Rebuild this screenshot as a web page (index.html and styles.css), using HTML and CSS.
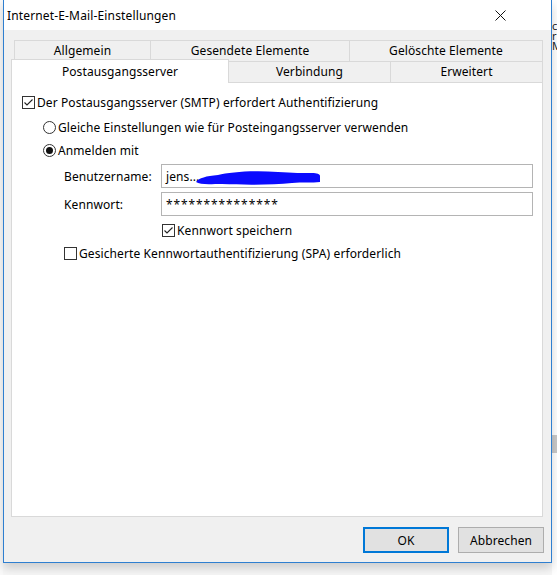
FILE: index.html
```html
<!DOCTYPE html>
<html lang="de">
<head>
<meta charset="utf-8">
<title>Internet-E-Mail-Einstellungen</title>
<link rel="stylesheet" href="styles.css">
</head>
<body>
<div class="screen">
  <div class="bg-left"></div>
  <div class="dialog">
    <div class="titlebar">
      <span class="title">Internet-E-Mail-Einstellungen</span>
      <svg class="close" width="11" height="11" viewBox="0 0 11 11"><path d="M0.5 0.5 L10.5 10.5 M10.5 0.5 L0.5 10.5" stroke="#111" stroke-width="1" fill="none"/></svg>
    </div>
    <div class="client">
      <div class="tabs">
        <div class="tab-row back">
          <div class="tab w-allg">Allgemein</div>
          <div class="tab w-ges">Gesendete Elemente</div>
          <div class="tab w-gel">Gelöschte Elemente</div>
        </div>
        <div class="tab-row front">
          <div class="tab selected w-post">Postausgangsserver</div>
          <div class="tab w-verb">Verbindung</div>
          <div class="tab w-erw">Erweitert</div>
        </div>
      </div>
      <div class="panel">
        <div class="row row-a">
          <svg class="box" width="13" height="13" viewBox="0 0 13 13"><rect x="0.5" y="0.5" width="12" height="12" fill="#fff" stroke="#333"/><path d="M2.5 6.5 L5 9 L10.5 3.5" stroke="#222" stroke-width="1.1" fill="none"/></svg>
          <span>Der Postausgangsserver (SMTP) erfordert Authentifizierung</span>
        </div>
        <div class="row row-b">
          <svg class="box" width="13" height="13" viewBox="0 0 13 13"><circle cx="6.5" cy="6.5" r="6" fill="#fff" stroke="#333"/></svg>
          <span>Gleiche Einstellungen wie für Posteingangsserver verwenden</span>
        </div>
        <div class="row row-c">
          <svg class="box" width="13" height="13" viewBox="0 0 13 13"><circle cx="6.5" cy="6.5" r="6" fill="#fff" stroke="#333"/><circle cx="6.5" cy="6.5" r="3.5" fill="#111"/></svg>
          <span>Anmelden mit</span>
        </div>
        <div class="field row-d">
          <span class="label">Benutzername:</span>
          <div class="input">
            <span>jens...</span>
            <svg class="scribble" width="126" height="16" viewBox="0 0 126 16"><path d="M0 12 C3 8 10 6 22 5 C34 2 58 0 82 2 C96 3 108 3 116 3 C121 3 124 4 124 6 L124 12 C116 13 106 12 96 13 C76 15 48 15 26 14 C14 14 4 15 0 12 Z" fill="#0a0aff"/></svg>
          </div>
        </div>
        <div class="field row-e">
          <span class="label">Kennwort:</span>
          <div class="input"><span class="secret">***************</span></div>
        </div>
        <div class="row row-f">
          <svg class="box" width="13" height="13" viewBox="0 0 13 13"><rect x="0.5" y="0.5" width="12" height="12" fill="#fff" stroke="#333"/><path d="M2.5 6.5 L5 9 L10.5 3.5" stroke="#222" stroke-width="1.1" fill="none"/></svg>
          <span>Kennwort speichern</span>
        </div>
        <div class="row row-g">
          <svg class="box" width="13" height="13" viewBox="0 0 13 13"><rect x="0.5" y="0.5" width="12" height="12" fill="#fff" stroke="#333"/></svg>
          <span>Gesicherte Kennwortauthentifizierung (SPA) erforderlich</span>
        </div>
      </div>
      <div class="buttons">
        <div class="btn default">OK</div>
        <div class="btn">Abbrechen</div>
      </div>
    </div>
  </div>
  <div class="bg-right">
    <span class="frag">c</span>
    <span class="frag">r</span>
    <span class="frag">M</span>
    <div class="bg-fill"></div>
    <div class="bg-band"></div>
  </div>
</div>
</body>
</html>
```

FILE: styles.css
```css
html, body {
  margin: 0;
  padding: 0;
}

body {
  width: 557px;
  height: 575px;
  overflow: hidden;
  background: #f7f7f7;
  font-family: "Noto Sans", "Open Sans", sans-serif;
  font-size: 12px;
  letter-spacing: 0.1px;
  color: #000;
}

.screen {
  display: flex;
  height: 575px;
  align-items: flex-start;
}

/* window behind the dialog, peeking out at the edges */
.bg-left {
  width: 3px;
  height: 575px;
  background: #fafafa;
  flex: none;
}

.bg-right {
  flex: 1;
  height: 575px;
  background: #fff;
  display: flex;
  flex-direction: column;
  font-size: 11px;
  line-height: 10px;
  color: #222;
}

.bg-right .frag {
  height: 10px;
}

.bg-right .frag:first-child {
  margin-top: 21px;
}

.bg-fill {
  height: 384px;
}

.bg-band {
  height: 18px;
  background: #c9c9c9;
}

/* dialog frame */
.dialog {
  width: 549px;
  height: 563px;
  flex: none;
  box-sizing: border-box;
  border: 1px solid #2f7fd0;
  border-top: none;
  display: flex;
  flex-direction: column;
  box-shadow: 0 5px 10px rgba(0, 0, 0, 0.18);
  position: relative;
  z-index: 1;
}

.titlebar {
  height: 30px;
  flex: none;
  background: #fff;
  display: flex;
  align-items: center;
  padding-left: 3px;
}

.title {
  font-size: 12px;
  letter-spacing: 0.15px;
}

.close {
  margin-left: auto;
  margin-right: 45px;
}

.client {
  flex: 1;
  background: #f0f0f0;
  padding: 10px 8px 0 7px;
  display: flex;
  flex-direction: column;
}

/* tab strip */
.tabs {
  display: flex;
  flex-direction: column;
}

.tab-row {
  display: flex;
  height: 21px;
  align-items: flex-start;
}

.tab-row.back {
  margin-left: 3px;
}

.tab {
  box-sizing: border-box;
  height: 21px;
  border: 1px solid #d9d9d9;
  border-bottom: none;
  background: #f0f0f0;
  display: flex;
  align-items: center;
  justify-content: center;
  padding-bottom: 1px;
}

.tab + .tab {
  margin-left: -1px;
}

.tab.selected {
  height: 24px;
  margin-top: -2px;
  background: #fff;
  position: relative;
  z-index: 2;
  padding-bottom: 0;
}

.w-allg { width: 137px; }
.w-ges { width: 200px; }
.w-gel { width: 194px; }
.w-post { width: 218px; }
.w-verb { width: 163px; }
.w-erw { width: 153px; }

/* page body */
.panel {
  height: 435px;
  box-sizing: border-box;
  border: 1px solid #d9d9d9;
  background: #fff;
  padding: 11px 0 0 10px;
  display: flex;
  flex-direction: column;
}

.row {
  display: flex;
  align-items: center;
  height: 17px;
}

.row .box {
  flex: none;
  margin-right: 2px;
}

.row-b { margin-top: 8px; padding-left: 21px; }
.row-c { margin-top: 6px; padding-left: 21px; }
.row-f { margin-top: 6px; padding-left: 140px; }
.row-g { margin-top: 6px; padding-left: 42px; }

.field {
  display: flex;
  align-items: center;
  padding-left: 42px;
}

.row-d { margin-top: 5px; }
.row-e { margin-top: 4px; }

.label {
  width: 97px;
  flex: none;
}

.input {
  width: 372px;
  height: 24px;
  box-sizing: border-box;
  border: 1px solid #b4b4b4;
  background: #fff;
  display: flex;
  align-items: center;
  padding-left: 4px;
  position: relative;
}

.secret {
  letter-spacing: 0.9px;
}

.scribble {
  position: absolute;
  left: 34px;
  top: 5px;
}

/* dialog buttons */
.buttons {
  display: flex;
  justify-content: flex-end;
  gap: 9px;
  margin-top: 10px;
  margin-right: -1px;
}

.btn {
  width: 86px;
  height: 26px;
  box-sizing: border-box;
  border: 1px solid #adadad;
  background: #e1e1e1;
  display: flex;
  align-items: center;
  justify-content: center;
}

.btn.default {
  border: 2px solid #0078d7;
}
```
